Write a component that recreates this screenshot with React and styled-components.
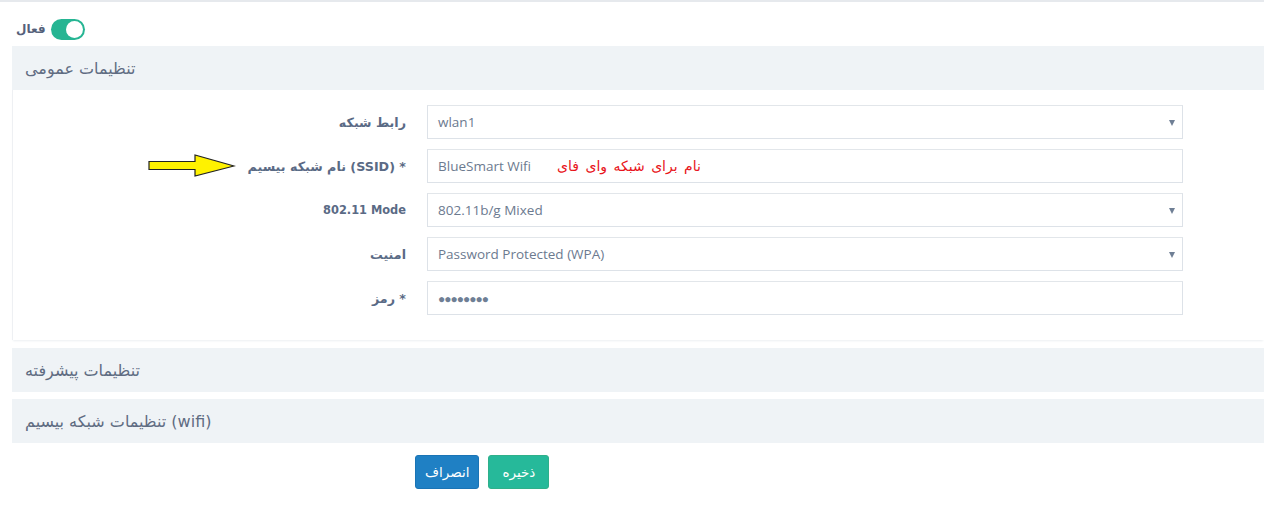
import React from "react";
import styled, { createGlobalStyle } from "styled-components";

const Global = createGlobalStyle`
  html, body { margin: 0; padding: 0; background: #fff; }
  body { font-family: "Open Sans", "DejaVu Sans", sans-serif; color: #5c6b82; }
  * { box-sizing: border-box; }
`;

const Page = styled.div`
  border-top: 2px solid #e6e9ed;
  padding: 0 0 20px 12px;
  width: 1264px;
  overflow: hidden;
`;

const ToggleRow = styled.div`
  height: 44px;
  display: flex;
  align-items: center;
  gap: 5px;
  padding-left: 4px;
  padding-top: 10px;
`;

const ToggleText = styled.span`
  font-family: "DejaVu Sans", sans-serif;
  font-weight: bold;
  font-size: 12px;
  color: #55617a;
  direction: rtl;
`;

const Switch = styled.div`
  width: 34px;
  height: 21px;
  border-radius: 11px;
  background: ${p => (p.$on ? "#26b593" : "#ccd3dc")};
  position: relative;
  &::after {
    content: "";
    position: absolute;
    top: 2px;
    left: ${p => (p.$on ? "15px" : "2px")};
    width: 17px;
    height: 17px;
    border-radius: 50%;
    background: #fff;
  }
`;

const Panel = styled.section`
  margin-bottom: ${p => p.$gap || 7}px;
`;

const PanelHead = styled.div`
  height: 44px;
  background: #eff3f6;
  display: flex;
  align-items: center;
  padding-left: 13px;
`;

const HeadTitle = styled.span`
  direction: rtl;
  font-family: "DejaVu Sans", sans-serif;
  font-size: 16px;
  color: #5f6c82;
`;

const PanelBody = styled.div`
  border-left: 1px solid #eef0f3;
  box-shadow: 0 2px 2px -1px #eceff2;
  padding: 15px 0 25px 0;
  display: grid;
  grid-template-columns: 393px 756px;
  column-gap: 21px;
  row-gap: 10px;
`;

const Label = styled.div`
  display: flex;
  align-items: center;
  justify-content: flex-end;
  gap: 12px;
  height: 34px;
`;

const LabelText = styled.span`
  direction: ${p => (p.$latin ? "ltr" : "rtl")};
  font-family: "DejaVu Sans", sans-serif;
  font-weight: bold;
  font-size: ${p => (p.$latin ? "11.4px" : "12.7px")};
  color: #5a6a85;
`;

const Field = styled.div`
  height: 34px;
  border: 1px solid #dde2e8;
  border-top-color: #e2e6ea;
  background: #fff;
  display: flex;
  align-items: center;
  padding: 0 10px;
  gap: 26px;
  font-family: "Open Sans", sans-serif;
  font-size: 13.5px;
  color: #6c7a8f;
  position: relative;
`;

const Caret = styled.span`
  position: absolute;
  right: 7px;
  top: 14px;
  width: 0;
  height: 0;
  border-left: 3.5px solid transparent;
  border-right: 3.5px solid transparent;
  border-top: 6px solid #6f7f95;
`;

const Note = styled.span`
  direction: rtl;
  font-family: "DejaVu Sans", sans-serif;
  font-size: 14px;
  word-spacing: 2px;
  color: #e8141b;
`;

const Dots = styled.span`
  font-size: 12px;
  letter-spacing: -1px;
  color: #6f7f95;
`;

const Actions = styled.div`
  display: flex;
  gap: 9px;
  padding-left: 403px;
`;

const Button = styled.button`
  height: 34px;
  padding: 0 ${p => (p.$variant === "save" ? 13 : 9)}px;
  border-radius: 3px;
  border: 1px solid ${p => (p.$variant === "save" ? "#2fb08a" : "#1a74b5")};
  background: ${p => (p.$variant === "save" ? "#26b99a" : "#1f80c4")};
  color: #fff;
  font-family: "DejaVu Sans", sans-serif;
  font-size: 13.5px;
  direction: rtl;
`;

const Arrow = () => (
  <svg width="88" height="24" viewBox="0 0 88 24">
    <polygon
      points="1,7.5 47,7.5 47,1 86,12 47,22 47,15.5 1,15.5"
      fill="#fff200"
      stroke="#222"
      strokeWidth="1.2"
    />
  </svg>
);

const rows = [
  { label: "رابط شبکه", value: "wlan1", select: true },
  { label: "* (SSID) نام شبکه بیسیم", value: "BlueSmart Wifi", arrow: true, note: "نام برای شبکه وای فای" },
  { label: "802.11 Mode", value: "802.11b/g Mixed", select: true, latin: true },
  { label: "امنیت", value: "Password Protected (WPA)", select: true },
  { label: "* رمز", password: true },
];

export default function App() {
  return (
    <>
      <Global />
      <Page>
        <ToggleRow>
          <ToggleText>فعال</ToggleText>
          <Switch $on />
        </ToggleRow>
        <Panel $gap={8}>
          <PanelHead>
            <HeadTitle>تنظیمات عمومی</HeadTitle>
          </PanelHead>
          <PanelBody>
            {rows.map((r, i) => (
              <React.Fragment key={i}>
                <Label>
                  {r.arrow && <Arrow />}
                  <LabelText $latin={r.latin}>{r.label}</LabelText>
                </Label>
                <Field>
                  {r.password ? <Dots>●●●●●●●●</Dots> : <span>{r.value}</span>}
                  {r.note && <Note>{r.note}</Note>}
                  {r.select && <Caret />}
                </Field>
              </React.Fragment>
            ))}
          </PanelBody>
        </Panel>
        <Panel>
          <PanelHead>
            <HeadTitle>تنظیمات پیشرفته</HeadTitle>
          </PanelHead>
        </Panel>
        <Panel $gap={12}>
          <PanelHead>
            <HeadTitle>(wifi) تنظیمات شبکه بیسیم</HeadTitle>
          </PanelHead>
        </Panel>
        <Actions>
          <Button $variant="cancel">انصراف</Button>
          <Button $variant="save">ذخیره</Button>
        </Actions>
      </Page>
    </>
  );
}
